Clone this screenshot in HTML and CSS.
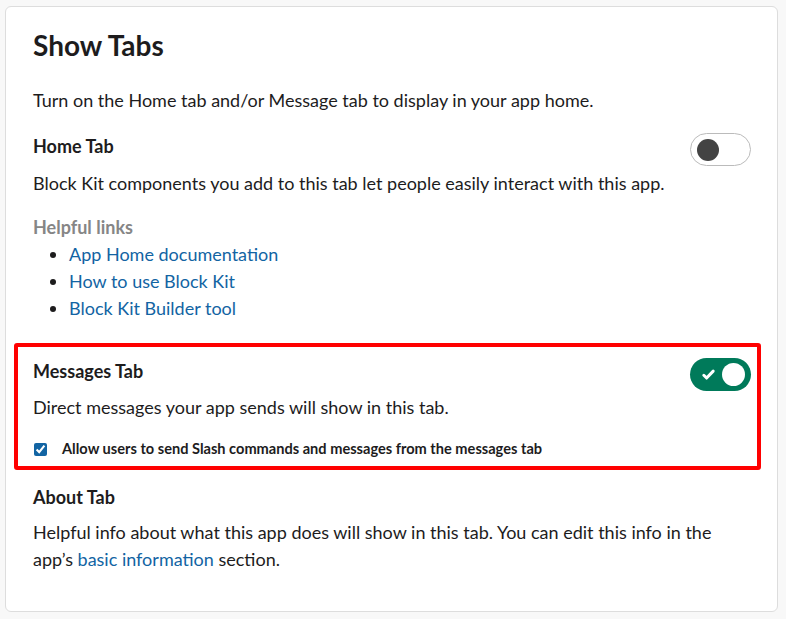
FILE: index.html
```html
<!DOCTYPE html>
<html lang="en">
<head>
<meta charset="utf-8">
<title>Show Tabs</title>
<link rel="stylesheet" href="styles.css">
</head>
<body>
<main class="card">
  <h1 class="title">Show Tabs</h1>
  <p class="intro">Turn on the Home tab and/or Message tab to display in your app home.</p>

  <section class="tab tab-home">
    <div class="tab-head">
      <h2 class="tab-name">Home Tab</h2>
      <span class="toggle toggle-off" role="switch" aria-checked="false"><span class="knob"></span></span>
    </div>
    <p class="desc">Block Kit components you add to this tab let people easily interact with this app.</p>
    <div class="links">
      <div class="links-title">Helpful links</div>
      <ul class="link-list">
        <li><a href="#">App Home documentation</a></li>
        <li><a href="#">How to use Block Kit</a></li>
        <li><a href="#">Block Kit Builder tool</a></li>
      </ul>
    </div>
  </section>

  <section class="tab tab-highlight">
    <div class="tab-head">
      <h2 class="tab-name">Messages Tab</h2>
      <span class="toggle toggle-on" role="switch" aria-checked="true">
        <svg class="check" viewBox="0 0 16 16" width="15" height="15"><path d="M3 8.8l3 3 7-7.4" fill="none" stroke="#fff" stroke-width="3.2" stroke-linecap="round" stroke-linejoin="round"/></svg>
        <span class="knob"></span>
      </span>
    </div>
    <p class="desc">Direct messages your app sends will show in this tab.</p>
    <label class="check-row">
      <input type="checkbox" checked>
      <span>Allow users to send Slash commands and messages from the messages tab</span>
    </label>
  </section>

  <section class="tab tab-about">
    <h2 class="tab-name">About Tab</h2>
    <p class="desc">Helpful info about what this app does will show in this tab. You can edit this info in the app’s <a href="#">basic information</a> section.</p>
  </section>
</main>
</body>
</html>
```

FILE: styles.css
```css
html, body {
  margin: 0;
  padding: 0;
}
body {
  background: #f8f8f8;
  font-family: Lato, "Open Sans", sans-serif;
  color: #1d1c1d;
  font-size: 18px;
}
.card {
  box-sizing: border-box;
  width: 773px;
  height: 606px;
  margin: 6px 0 0 5px;
  background: #fff;
  border: 1px solid #dddddd;
  border-radius: 6px;
  padding: 20px 26px 0 27px;
}
.title {
  margin: 0;
  font-size: 28px;
  font-weight: 700;
  line-height: 36px;
}
.intro {
  margin: 24px 0 0;
  line-height: 27px;
}
.tab-head {
  display: flex;
  justify-content: space-between;
  align-items: flex-start;
  height: 33px;
}
.tab-name {
  margin: 0;
  font-size: 18px;
  font-weight: 700;
  line-height: 27px;
}
.desc {
  margin: 4px 0 0;
  line-height: 27px;
}
.toggle {
  box-sizing: border-box;
  flex: none;
  width: 61px;
  height: 33px;
  border-radius: 17px;
  display: flex;
  align-items: center;
}
.toggle-off {
  border: 1px solid #bbbbbb;
  background: #fff;
  padding-left: 6px;
}
.toggle-off .knob {
  width: 22px;
  height: 22px;
  border-radius: 50%;
  background: #434343;
}
.toggle-on {
  background: #007a5a;
  justify-content: space-between;
  padding: 0 6px 0 11px;
}
.toggle-on .knob {
  width: 23px;
  height: 23px;
  border-radius: 50%;
  background: #fff;
}
.check {
  display: block;
}
.tab-home {
  margin-top: 19px;
}
.links {
  margin-top: 17px;
}
.links-title {
  color: #868686;
  font-weight: 700;
  line-height: 27px;
}
.link-list {
  margin: 0;
  padding-left: 36px;
  line-height: 27px;
}
a {
  color: #1264a3;
  text-decoration: none;
}
.tab-highlight {
  border: 4px solid #ff0000;
  border-radius: 3px;
  margin: 21px -10px 0 -19px;
  padding: 11px 6px 7px 15px;
}
.tab-highlight .desc {
  margin-top: 3px;
}
.check-row {
  display: flex;
  align-items: center;
  gap: 15px;
  margin-top: 18px;
  font-size: 14.6px;
  font-weight: 700;
  line-height: 20px;
}
.check-row input {
  margin: 0 0 0 1px;
  width: 13px;
  height: 13px;
  accent-color: #1264a3;
}
.tab-about {
  margin-top: 14px;
}
.tab-about .desc {
  margin-top: 8px;
}
```
